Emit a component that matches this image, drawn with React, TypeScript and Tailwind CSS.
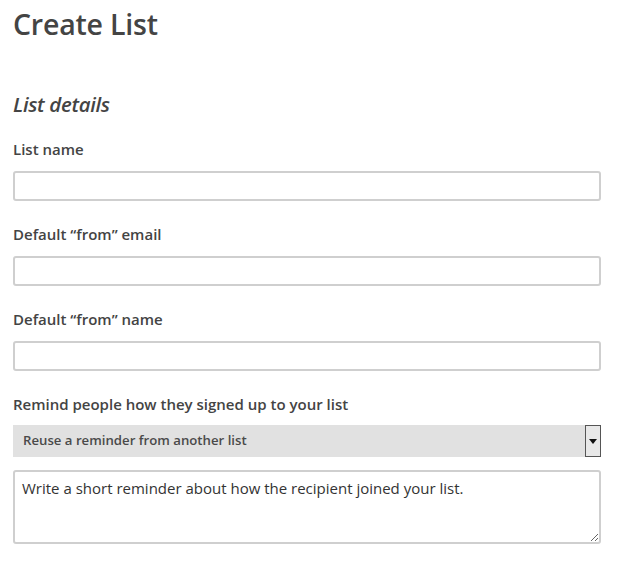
export default function App() {
  const fields = ["List name", "Default \u201cfrom\u201d email", "Default \u201cfrom\u201d name"];

  return (
    <div
      className="min-h-[562px] bg-white pl-[13px] pt-[4px] text-[#444]"
      style={{ fontFamily: '"Open Sans", "Noto Sans", sans-serif' }}
    >
      <div className="w-[588px]">
        {/* Page title */}
        <h1 className="text-[28.5px] font-semibold leading-[40px] tracking-[-0.2px]">Create List</h1>

        {/* Section heading */}
        <h2 className="mt-[46px] text-[20.4px] font-semibold italic leading-[28px] tracking-[-0.3px]">List details</h2>

        {fields.map((label, i) => (
          <div key={label} className={i === 0 ? "mt-[21px]" : "mt-[23px]"}>
            <label className="block text-[15px] font-semibold leading-[20px]">{label}</label>
            <input
              type="text"
              className="mt-[12px] block h-[30px] w-full rounded-[3px] border-2 border-[#cfcfcf] bg-white px-2 text-[15px] outline-none"
            />
          </div>
        ))}

        {/* Reminder */}
        <div className="mt-[23px]">
          <label className="block text-[15px] font-semibold leading-[20px]">
            Remind people how they signed up to your list
          </label>
          <div className="mt-[11px] flex h-[32px] w-full items-center bg-[#e1e1e1]">
            <span className="flex-1 pl-[10px] text-[13.2px] font-semibold text-[#4a4a4a]">
              Reuse a reminder from another list
            </span>
            <div className="flex h-full w-[16px] items-center justify-center border border-[#555] bg-[#e8e8e8]">
              <svg width="8" height="5" viewBox="0 0 8 5">
                <path d="M0 0h8L4 5z" fill="#111" />
              </svg>
            </div>
          </div>
          <textarea
            defaultValue="Write a short reminder about how the recipient joined your list."
            className="mt-[13px] block h-[74px] w-full rounded-[3px] border-2 border-[#cfcfcf] bg-white px-[7px] py-[6px] text-[15px] leading-[20px] text-[#333] outline-none"
          />
        </div>
      </div>
    </div>
  );
}
